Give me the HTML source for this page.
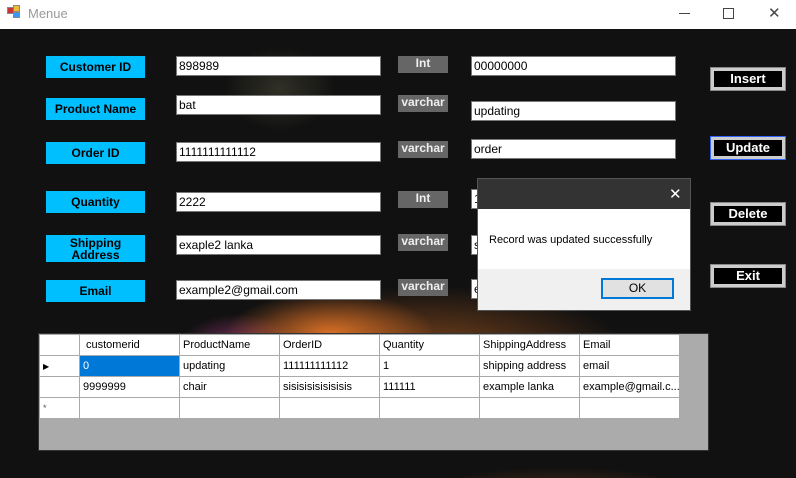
<!DOCTYPE html>
<html><head><style>
body{margin:0;width:796px;height:478px;overflow:hidden;position:relative;font-family:"Liberation Sans",sans-serif;background:#fff}
.abs{position:absolute;box-sizing:border-box}
.bg{left:0;top:29px;width:796px;height:449px;background:
radial-gradient(ellipse 150px 60px at 330px 305px,rgba(235,120,40,.9),transparent 70%),
radial-gradient(ellipse 280px 90px at 430px 320px,rgba(150,80,30,.75),transparent 70%),
radial-gradient(ellipse 90px 50px at 240px 320px,rgba(170,60,130,.75),transparent 70%),
radial-gradient(ellipse 240px 60px at 560px 480px,rgba(140,70,25,.7),transparent 70%),
radial-gradient(ellipse 80px 60px at 280px 60px,rgba(80,80,60,.5),transparent 70%),
#111}
.lab{left:46px;width:99px;height:22px;background:#00bfff;color:#000;font-weight:bold;font-size:12px;text-align:center;line-height:22px}
.tb{left:176px;width:205px;height:20px;background:#fff;border:1px solid #777;font-size:12px;padding:2px 2px;line-height:15px;color:#000}
.tb2{left:471px;width:205px}
.ty{left:398px;width:50px;height:17px;background:#666;color:#eee;font-weight:bold;font-size:12px;text-align:center;line-height:15px}
.btn{left:711px;width:74px;height:22px;background:#000;border:3px solid #ccc;outline:1px solid #888;color:#fff;font-weight:bold;font-size:13px;text-align:center;line-height:16px}
table{border-collapse:collapse;font-size:11px;table-layout:fixed;width:640px}
td{border:1px solid #aaa;height:21px;padding:0 3px;background:#fff;white-space:nowrap;overflow:hidden;box-sizing:border-box}
</style></head><body>
<div class="abs" style="left:0;top:0;width:796px;height:29px;background:#fff"></div>
<div class="abs" style="left:7px;top:7px;width:7px;height:7px;background:#c33;border:1px solid #888"></div>
<div class="abs" style="left:13px;top:5px;width:7px;height:7px;background:#eb3;border:1px solid #888"></div>
<div class="abs" style="left:13px;top:12px;width:7px;height:6px;background:#39f;border:1px solid #888"></div>
<div class="abs" style="left:28px;top:6px;font-size:13px;color:#999">Menue</div>
<div class="abs" style="left:679px;top:13px;width:11px;height:1px;background:#444"></div>
<div class="abs" style="left:723px;top:8px;width:11px;height:11px;border:1px solid #444"></div>
<div class="abs" style="left:768px;top:4px;font-size:15px;color:#444">&#10005;</div>
<div class="abs bg"></div>

<div class="abs lab" style="top:56px">Customer ID</div>
<div class="abs lab" style="top:98px">Product Name</div>
<div class="abs lab" style="top:142px">Order ID</div>
<div class="abs lab" style="top:191px">Quantity</div>
<div class="abs lab" style="top:235px;height:27px;line-height:12px;padding-top:2px">Shipping<br>Address</div>
<div class="abs lab" style="top:280px">Email</div>

<div class="abs tb" style="top:56px">898989</div>
<div class="abs tb" style="top:95px">bat</div>
<div class="abs tb" style="top:142px">1111111111112</div>
<div class="abs tb" style="top:192px">2222</div>
<div class="abs tb" style="top:235px">exaple2 lanka</div>
<div class="abs tb" style="top:280px">example2@gmail.com</div>

<div class="abs ty" style="top:56px">Int</div>
<div class="abs ty" style="top:95px">varchar</div>
<div class="abs ty" style="top:141px">varchar</div>
<div class="abs ty" style="top:191px">Int</div>
<div class="abs ty" style="top:234px">varchar</div>
<div class="abs ty" style="top:279px">varchar</div>

<div class="abs tb tb2" style="top:56px">00000000</div>
<div class="abs tb tb2" style="top:101px">updating</div>
<div class="abs tb tb2" style="top:139px">order</div>
<div class="abs tb tb2" style="top:189px">1</div>
<div class="abs tb tb2" style="top:235px">s</div>
<div class="abs tb tb2" style="top:279px">e</div>

<div class="abs btn" style="top:68px">Insert</div>
<div class="abs btn" style="top:137px;outline:1px solid #36f">Update</div>
<div class="abs btn" style="top:203px">Delete</div>
<div class="abs btn" style="top:265px">Exit</div>

<div class="abs" style="left:38px;top:333px;width:671px;height:118px;background:#ababab;border:1px solid #333">
<table style="position:absolute;left:0;top:0">
<colgroup><col style="width:40px"><col style="width:100px"><col style="width:100px"><col style="width:100px"><col style="width:100px"><col style="width:100px"><col style="width:100px"></colgroup>
<tr><td></td><td style="padding-left:6px">customerid</td><td>ProductName</td><td>OrderID</td><td>Quantity</td><td>ShippingAddress</td><td>Email</td></tr>
<tr><td style="font-size:8px">&#9654;</td><td style="background:#0078d7;color:#fff">0</td><td>updating</td><td>111111111112</td><td>1</td><td>shipping address</td><td>email</td></tr>
<tr><td></td><td>9999999</td><td>chair</td><td>sisisisisisisisis</td><td>111111</td><td>example lanka</td><td>example@gmail.c...</td></tr>
<tr><td style="font-size:9px;color:#555">*</td><td></td><td></td><td></td><td></td><td></td><td></td></tr>
</table></div>

<div class="abs" style="left:477px;top:178px;width:214px;height:133px;border:1px solid #555;background:#fff">
<div class="abs" style="left:0;top:0;width:212px;height:30px;background:#333"></div>
<div class="abs" style="left:191px;top:6px;color:#fff;font-size:15px">&#10005;</div>
<div class="abs" style="left:11px;top:55px;font-size:11px;color:#000">Record was updated successfully</div>
<div class="abs" style="left:0;top:90px;width:212px;height:41px;background:#f0f0f0"></div>
<div class="abs" style="left:123px;top:99px;width:73px;height:21px;background:#e1e1e1;border:2px solid #0078d7;font-size:12px;text-align:center;line-height:17px">OK</div>
</div>
</body></html>
